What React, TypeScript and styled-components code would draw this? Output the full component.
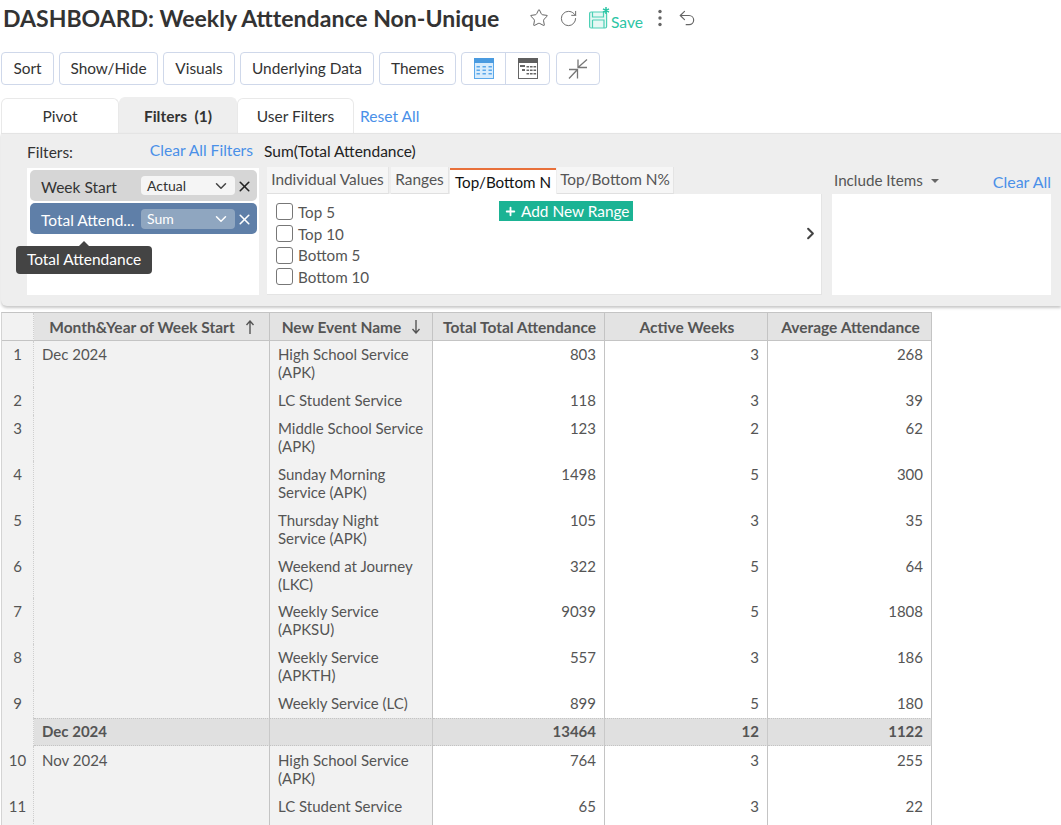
import React from "react";
import styled, { createGlobalStyle } from "styled-components";
import { Star, RotateCw, Undo2, ChevronDown, ChevronRight, X, Plus } from "lucide-react";

const Global = createGlobalStyle`
  html, body { margin: 0; padding: 0; height: 100%; overflow: hidden; background: #fff; }
  body { font-family: Lato, "Liberation Sans", sans-serif; color: #333; }
  * { box-sizing: border-box; }
`;

const Page = styled.div`
  width: 1061px;
  height: 825px;
  overflow: hidden;
`;

const TitleBar = styled.header`
  display: flex;
  align-items: center;
  height: 36px;
  padding-left: 3px;
`;

const Title = styled.h1`
  margin: 0;
  font-size: 23.05px;
  font-weight: 700;
  line-height: 36px;
  color: #333;
  white-space: nowrap;
  width: 526px;
`;

const TitleIcon = styled.span`
  display: inline-flex;
  color: #666;
  margin-left: ${(p) => p.$left ?? 0}px;
`;

const SaveAction = styled.span`
  display: inline-flex;
  align-items: flex-end;
  color: #2cc5a5;
  margin-left: 11px;
`;

const SaveLabel = styled.span`
  font-size: 15.6px;
  line-height: 18px;
  margin-bottom: -2px;
`;

const Toolbar = styled.div`
  display: flex;
  gap: 5px;
  height: 33px;
  margin: 16px 0 12px 1px;
`;

const ToolButton = styled.button`
  height: 33px;
  padding: 0 0 2px;
  margin: 0;
  background: #fff;
  border: 1px solid #cfd8ea;
  border-radius: 4px;
  font: 400 15.4px Lato, sans-serif;
  color: #333;
  display: inline-flex;
  align-items: center;
  justify-content: center;
  width: ${(p) => p.$w}px;
`;

const CompressButton = styled(ToolButton)`
  margin-left: 1px;
  padding: 0;
`;

const ButtonGroup = styled.div`
  display: flex;
  width: 89px;
  height: 33px;
  border: 1px solid #cfd8ea;
  border-radius: 4px;
`;

const GroupPart = styled.div`
  flex: ${(p) => (p.$last ? "1" : "0 0 44px")};
  display: flex;
  align-items: center;
  justify-content: center;
  border-right: ${(p) => (p.$last ? "none" : "1px solid #cfd8ea")};
`;

const TabRow = styled.div`
  display: flex;
  align-items: flex-end;
  height: 36px;
  padding-left: 1px;
`;

const MainTab = styled.div`
  width: ${(p) => p.$w}px;
  height: ${(p) => (p.$active ? 36 : 35)}px;
  display: flex;
  align-items: center;
  justify-content: center;
  font-size: 15.5px;
  font-weight: ${(p) => (p.$active ? 700 : 400)};
  color: #333;
  background: ${(p) => (p.$active ? "#eeeeee" : "#fff")};
  border: 1px solid ${(p) => (p.$active ? "#eeeeee" : "#e9e9e9")};
  border-bottom: none;
  border-radius: 6px 6px 0 0;
  white-space: pre;
`;

const BlueLink = styled.a`
  color: #4a90e8;
  font-size: 15.6px;
  white-space: nowrap;
`;

const ResetLink = styled(BlueLink)`
  margin: 0 0 8px 6px;
`;

const Panel = styled.section`
  position: relative;
  display: flex;
  height: 173px;
  margin-left: 1px;
  padding: 0 10px 11px 26px;
  background: #eeeeee;
  border-top: 1px solid #e4e4e4;
  border-radius: 0 0 0 6px;
  box-shadow: 0 2px 3px rgba(0, 0, 0, 0.22);
`;

const FieldColumn = styled.div`
  flex: 0 0 232px;
  display: flex;
  flex-direction: column;
  justify-content: flex-end;
`;

const FieldHead = styled.div`
  display: flex;
  justify-content: space-between;
  align-items: flex-start;
  height: 27px;
  padding-right: 6px;
  font-size: 15.5px;
  line-height: 18px;
`;

const FieldLabel = styled.span`
  padding-top: 2px;
  color: #333;
`;

const FieldBox = styled.div`
  position: relative;
  height: 127px;
  background: #fff;
  padding: 2px 2px 0 3px;
  display: flex;
  flex-direction: column;
  gap: 2px;
`;

const Pill = styled.div`
  display: flex;
  align-items: center;
  height: 31px;
  padding-left: 11px;
  border-radius: 5px;
  background: ${(p) => (p.$blue ? "#5f7fa8" : "#d6d6d6")};
  color: ${(p) => (p.$blue ? "#fff" : "#333")};
  font-size: 15.5px;
`;

const PillName = styled.span`
  width: 100px;
  padding-top: 3px;
  white-space: nowrap;
`;

const PillSelect = styled.div`
  display: flex;
  align-items: center;
  justify-content: space-between;
  width: 94px;
  height: ${(p) => (p.$blue ? 20 : 19)}px;
  padding: 0 5px 0 6px;
  border-radius: 4px;
  background: ${(p) => (p.$blue ? "#8fa6c0" : "#f5f5f5")};
  color: ${(p) => (p.$blue ? "#fff" : "#333")};
  font-size: 14px;
`;

const PillClose = styled.span`
  display: inline-flex;
  margin: 2px 0 0 1px;
`;

const Tip = styled.div`
  position: absolute;
  left: -11px;
  top: 78px;
  width: 136px;
  height: 28px;
  padding-bottom: 2px;
  display: flex;
  align-items: center;
  justify-content: center;
  background: #444;
  color: #fff;
  border-radius: 4px;
  font-size: 15.5px;
  &::before {
    content: "";
    position: absolute;
    left: 63px;
    top: -5px;
    border-left: 5px solid transparent;
    border-right: 5px solid transparent;
    border-bottom: 5px solid #444;
  }
`;

const RangeColumn = styled.div`
  flex: 0 0 555px;
  margin-left: 8px;
  display: flex;
  flex-direction: column;
  justify-content: flex-end;
`;

const RangeTitle = styled.div`
  margin: 0 0 6px -3px;
  font-size: 15.5px;
  line-height: 18px;
  color: #222;
`;

const SubTabs = styled.div`
  display: flex;
  align-items: flex-end;
  height: 28px;
`;

const SubTab = styled.div`
  width: ${(p) => p.$w}px;
  margin-right: ${(p) => p.$gap ?? 1}px;
  height: ${(p) => (p.$active ? 26 : 27)}px;
  display: flex;
  justify-content: center;
  align-items: ${(p) => (p.$active ? "center" : "flex-start")};
  padding-top: ${(p) => (p.$active ? 0 : 3)}px;
  font-size: ${(p) => (p.$active ? 15.2 : 15.4)}px;
  line-height: 18px;
  white-space: nowrap;
  color: ${(p) => (p.$active ? "#111" : "#555")};
  background: ${(p) => (p.$active ? "#fff" : "#f6f6f6")};
  border-bottom: ${(p) => (p.$active ? "none" : "1px solid #e0e0e0")};
  border-right: ${(p) => (p.$active ? "none" : "1px solid #e4e4e4")};
  border-top: ${(p) => (p.$active ? "2px solid #e8703a" : "none")};
`;

const RangeBox = styled.div`
  position: relative;
  height: 101px;
  background: #fff;
  border-right: 1px solid #e4e4e4;
  border-bottom: 1px solid #e4e4e4;
  padding: 7px 0 0 9px;
  display: flex;
`;

const CheckList = styled.div`
  display: flex;
  flex-direction: column;
  width: 223px;
`;

const CheckRow = styled.label`
  display: flex;
  align-items: center;
  height: 21.7px;
  gap: 5px;
  color: #555;
  font-size: 15.2px;
`;

const CheckBox = styled.span`
  width: 17px;
  height: 17px;
  border: 1px solid #777;
  border-radius: 3px;
  background: #fff;
`;

const AddRange = styled.div`
  display: flex;
  align-items: center;
  gap: 4px;
  width: 134px;
  height: 20px;
  padding-left: 5px;
  background: #1bb394;
  color: #fff;
  font-size: 15.4px;
`;

const NextArrow = styled.span`
  position: absolute;
  right: 1px;
  top: 30px;
  display: inline-flex;
  color: #444;
`;

const ItemsColumn = styled.div`
  flex: 0 0 219px;
  margin-left: 10px;
  display: flex;
  flex-direction: column;
  justify-content: flex-end;
`;

const ItemsHead = styled.div`
  display: flex;
  justify-content: space-between;
  align-items: center;
  height: 28px;
  padding: 0 0 0 2px;
  font-size: 15.2px;
  color: #555;
`;

const ItemsLabel = styled.span`
  display: inline-flex;
  align-items: center;
  gap: 8px;
  margin-top: -1px;
`;

const ItemsClear = styled(BlueLink)`
  margin-top: 2px;
  font-size: 16px;
`;

const Caret = styled.span`
  border-left: 4px solid transparent;
  border-right: 4px solid transparent;
  border-top: 4px solid #666;
  margin-top: 2px;
`;

const ItemsBox = styled.div`
  height: 101px;
  background: #fff;
`;

const GridTable = styled.table`
  margin: 6px 0 0 1px;
  width: 931px;
  table-layout: fixed;
  border-collapse: separate;
  border-spacing: 0;
  border-top: 1px solid #c4c4c4;
  border-left: 1px solid #d4d4d4;
  font-size: 15px;
  color: #555;
`;

const HeadCell = styled.th`
  height: 28px;
  padding: 0 5px 0 7px;
  background: ${(p) => (p.$blank ? "#f2f2f2" : "#e3e3e3")};
  border-right: 1px solid #c4c4c4;
  border-bottom: 1px solid #c4c4c4;
  font-weight: 700;
  font-size: 15.5px;
  color: #555;
  text-align: center;
  white-space: nowrap;
  ${(p) => p.$blank && "border-right: 1px dotted #cfcfcf;"}
`;

const SortArrow = styled.span`
  display: inline-flex;
  vertical-align: -1px;
  margin-left: 9px;
  color: #555;
`;

const IndexCell = styled.td`
  background: #f2f2f2;
  border-right: 1px dotted #cfcfcf;
  padding: ${(p) => (p.$lead ? 5.5 : 4.2)}px 0 0 0;
  text-align: center;
  vertical-align: top;
  line-height: 18px;
  color: #555;
`;

const BodyCell = styled.td`
  height: ${(p) => (p.$two ? 45.875 : 27.875)}px;
  padding: ${(p) => (p.$lead ? 5.5 : 4.2)}px 8px 0 8px;
  vertical-align: top;
  line-height: 18px;
  text-align: ${(p) => (p.$num ? "right" : "left")};
  background: ${(p) => (p.$num ? "#fff" : "#f2f2f2")};
  border-right: 1px solid #c4c4c4;
  color: #555;
`;

const TotalCell = styled.td`
  height: 28px;
  padding: 0 8px 1px;
  font-weight: 700;
  text-align: ${(p) => (p.$num ? "right" : "left")};
  background: #e0e0e0;
  border-top: 1px dotted #c4c4c4;
  border-bottom: 1px dotted #c4c4c4;
  border-right: 1px solid #c9c9c9;
  color: #555;
`;

const TableIcon = ({ dark }: { dark?: boolean }) => {
  const head = dark ? "#5f5f5f" : "#4a9be0";
  const line = dark ? "#666" : "#5aa8ea";
  const body = dark ? "#fff" : "#d8ecfc";
  const rows = [8, 11.5, 15];
  const cols = dark ? [8.5, 12, 15.5] : [2.5, 8.5, 14.5];
  return (
    <svg width="20" height="21" viewBox="0 0 20 21">
      <rect x="0.5" y="0.5" width="19" height="20" fill={body} stroke={line} />
      <rect x="0" y="0" width="20" height="5" fill={head} />
      {dark && <rect x="2" y="7" width="5" height="2" fill={line} />}
      {dark && <rect x="4" y="11" width="3" height="2" fill={line} />}
      {rows.map((y) =>
        cols.map((x) => (
          <rect key={`${x}-${y}`} x={x} y={y} width={dark ? 2.6 : 3.4} height="1.5" fill={line} />
        ))
      )}
    </svg>
  );
};

const CompressIcon = () => (
  <svg width="22" height="22" viewBox="0 0 22 22" fill="none" stroke="#777" strokeWidth="1.3">
    <path d="M20 1.5 L11 9.5 M11 1.5 V9.5 H20" />
    <path d="M2 20.5 L10.5 11.5 M2 11.5 H10.5 V20.5" />
  </svg>
);

const SaveIcon = () => (
  <svg width="22" height="22" viewBox="0 0 22 22" fill="none" stroke="#4dd0b5" strokeWidth="1.2">
    <rect x="0.6" y="5" width="17" height="16" rx="1.5" fill="#e6f8f4" />
    <path d="M3.5 5 V10 H14.5 V5 M3.5 13 H15 V21 M3.5 13 V21" />
    <path d="M17 0 V7 M14 1.8 L20 5.2 M20 1.8 L14 5.2" stroke="#2cc5a5" strokeWidth="1.5" />
  </svg>
);

const Kebab = () => (
  <svg width="6" height="18" viewBox="0 0 6 18" fill="#666">
    <circle cx="3" cy="2.5" r="1.7" />
    <circle cx="3" cy="9" r="1.7" />
    <circle cx="3" cy="15.5" r="1.7" />
  </svg>
);

type Row = { i?: number; name: string[]; v: number[] };

const group1: Row[] = [
  { i: 1, name: ["High School Service", "(APK)"], v: [803, 3, 268] },
  { i: 2, name: ["LC Student Service"], v: [118, 3, 39] },
  { i: 3, name: ["Middle School Service", "(APK)"], v: [123, 2, 62] },
  { i: 4, name: ["Sunday Morning", "Service (APK)"], v: [1498, 5, 300] },
  { i: 5, name: ["Thursday Night", "Service (APK)"], v: [105, 3, 35] },
  { i: 6, name: ["Weekend at Journey", "(LKC)"], v: [322, 5, 64] },
  { i: 7, name: ["Weekly Service", "(APKSU)"], v: [9039, 5, 1808] },
  { i: 8, name: ["Weekly Service", "(APKTH)"], v: [557, 3, 186] },
  { i: 9, name: ["Weekly Service (LC)"], v: [899, 5, 180] },
];

const group2: Row[] = [
  { i: 10, name: ["High School Service", "(APK)"], v: [764, 3, 255] },
  { i: 11, name: ["LC Student Service"], v: [65, 3, 22] },
];

const DataRows = ({ rows, month, lead }: { rows: Row[]; month: string; lead?: boolean }) => (
  <>
    {rows.map((r, idx) => (
      <tr key={r.i}>
        <IndexCell $lead={lead}>{r.i}</IndexCell>
        <BodyCell $two={r.name.length > 1} $lead={lead}>{idx === 0 ? month : ""}</BodyCell>
        <BodyCell $lead={lead}>
          {r.name.map((n, k) => (
            <React.Fragment key={n}>
              {k > 0 && <br />}
              {n}
            </React.Fragment>
          ))}
        </BodyCell>
        {r.v.map((n, k) => (
          <BodyCell key={k} $num $lead={lead}>
            {n}
          </BodyCell>
        ))}
      </tr>
    ))}
  </>
);

export default function App() {
  return (
    <Page>
      <Global />
      <TitleBar>
        <Title>DASHBOARD: Weekly Atttendance Non-Unique</Title>
        <TitleIcon><Star size={20} strokeWidth={1.2} /></TitleIcon>
        <TitleIcon $left={10}><RotateCw size={19} strokeWidth={1.2} /></TitleIcon>
        <SaveAction><SaveIcon /><SaveLabel>Save</SaveLabel></SaveAction>
        <TitleIcon $left={14}><Kebab /></TitleIcon>
        <TitleIcon $left={14}><Undo2 size={20} strokeWidth={1.4} /></TitleIcon>
      </TitleBar>
      <Toolbar>
        <ToolButton $w={53}>Sort</ToolButton>
        <ToolButton $w={99}>Show/Hide</ToolButton>
        <ToolButton $w={72}>Visuals</ToolButton>
        <ToolButton $w={134}>Underlying Data</ToolButton>
        <ToolButton $w={77}>Themes</ToolButton>
        <ButtonGroup>
          <GroupPart><TableIcon /></GroupPart>
          <GroupPart $last><TableIcon dark /></GroupPart>
        </ButtonGroup>
        <CompressButton $w={44}><CompressIcon /></CompressButton>
      </Toolbar>
      <TabRow>
        <MainTab $w={118}>Pivot</MainTab>
        <MainTab $w={118} $active>{"Filters  (1)"}</MainTab>
        <MainTab $w={117}>User Filters</MainTab>
        <ResetLink>Reset All</ResetLink>
      </TabRow>
      <Panel>
        <FieldColumn>
          <FieldHead>
            <FieldLabel>Filters:</FieldLabel>
            <BlueLink>Clear All Filters</BlueLink>
          </FieldHead>
          <FieldBox>
            <Pill>
              <PillName>Week Start</PillName>
              <PillSelect>Actual<ChevronDown size={18} strokeWidth={2} color="#444" /></PillSelect>
              <PillClose><X size={17} strokeWidth={2.3} color="#222" /></PillClose>
            </Pill>
            <Pill $blue>
              <PillName>Total Attend...</PillName>
              <PillSelect $blue>Sum<ChevronDown size={18} strokeWidth={2} color="#fff" /></PillSelect>
              <PillClose><X size={17} strokeWidth={2.3} color="#fff" /></PillClose>
            </Pill>
            <Tip>Total Attendance</Tip>
          </FieldBox>
        </FieldColumn>
        <RangeColumn>
          <RangeTitle>Sum(Total Attendance)</RangeTitle>
          <SubTabs>
            <SubTab $w={122} $gap={2}>Individual Values</SubTab>
            <SubTab $w={58}>Ranges</SubTab>
            <SubTab $w={106} $active>Top/Bottom N</SubTab>
            <SubTab $w={117}>Top/Bottom N%</SubTab>
          </SubTabs>
          <RangeBox>
            <CheckList>
              {["Top 5", "Top 10", "Bottom 5", "Bottom 10"].map((t) => (
                <CheckRow key={t}><CheckBox />{t}</CheckRow>
              ))}
            </CheckList>
            <AddRange><Plus size={13} strokeWidth={3.4} />Add New Range</AddRange>
            <NextArrow><ChevronRight size={19} strokeWidth={2.6} /></NextArrow>
          </RangeBox>
        </RangeColumn>
        <ItemsColumn>
          <ItemsHead>
            <ItemsLabel>Include Items<Caret /></ItemsLabel>
            <ItemsClear>Clear All</ItemsClear>
          </ItemsHead>
          <ItemsBox />
        </ItemsColumn>
      </Panel>
      <GridTable>
        <colgroup>
          <col style={{ width: 32 }} />
          <col style={{ width: 236 }} />
          <col style={{ width: 163 }} />
          <col style={{ width: 172 }} />
          <col style={{ width: 163 }} />
          <col style={{ width: 164 }} />
        </colgroup>
        <thead>
          <tr>
            <HeadCell $blank />
            <HeadCell>Month&amp;Year of Week Start<SortArrow><svg width="12" height="14" viewBox="0 0 12 14" fill="none" stroke="currentColor" strokeWidth="1.4"><path d="M6 14V1M2.5 5 6 1l3.5 4" /></svg></SortArrow></HeadCell>
            <HeadCell>New Event Name<SortArrow><svg width="12" height="14" viewBox="0 0 12 14" fill="none" stroke="currentColor" strokeWidth="1.4"><path d="M6 0v13M2.5 9 6 13l3.5-4" /></svg></SortArrow></HeadCell>
            <HeadCell>Total Total Attendance</HeadCell>
            <HeadCell>Active Weeks</HeadCell>
            <HeadCell>Average Attendance</HeadCell>
          </tr>
        </thead>
        <tbody>
          <DataRows rows={group1} month="Dec 2024" />
          <tr>
            <IndexCell />
            <TotalCell>Dec 2024</TotalCell>
            <TotalCell />
            <TotalCell $num>13464</TotalCell>
            <TotalCell $num>12</TotalCell>
            <TotalCell $num>1122</TotalCell>
          </tr>
          <DataRows rows={group2} month="Nov 2024" lead />
          <tr>
            <IndexCell />
            <BodyCell />
            <BodyCell />
            <BodyCell $num />
            <BodyCell $num />
            <BodyCell $num />
          </tr>
        </tbody>
      </GridTable>
    </Page>
  );
}
